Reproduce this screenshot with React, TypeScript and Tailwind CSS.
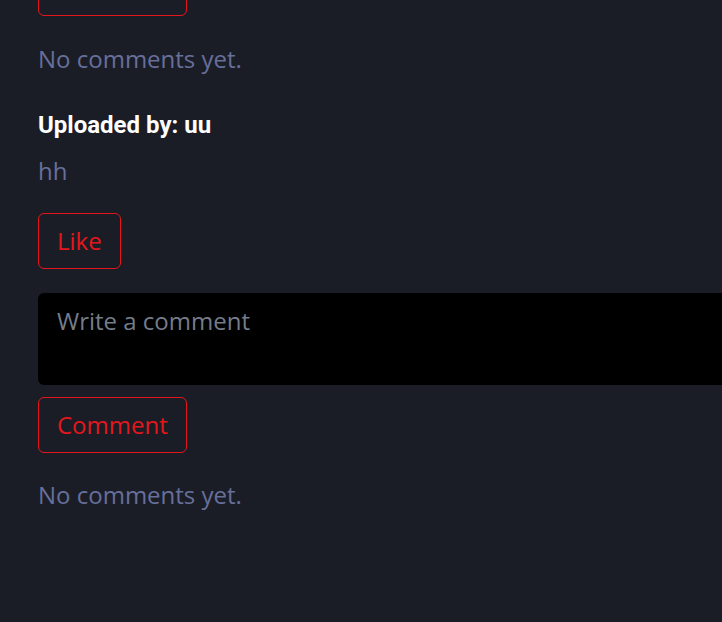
export default function App() {
  return (
    <div className="h-[622px] w-[722px] overflow-hidden bg-[#1b1d26] pl-[38px] font-['Open_Sans',sans-serif]">
      <div className="mt-[-40px] flex flex-col items-start">
        <button className="h-[56px] rounded-[6px] border border-[#e3171b] px-[18px] text-[24px] leading-[36px] text-[#e3171b]">
          Comment
        </button>
        <p className="mt-[25px] text-[24px] leading-[36px] text-[#676f9b]">No comments yet.</p>

        <h4 className="mt-[32px] font-['Roboto',sans-serif] text-[24px] leading-[32px] font-bold text-white">
          Uploaded by: uu
        </h4>
        <p className="mt-[12px] text-[24px] leading-[36px] text-[#676f9b]">hh</p>

        <button className="mt-[24px] h-[56px] rounded-[6px] border border-[#e3171b] px-[18px] text-[24px] leading-[36px] text-[#e3171b]">
          Like
        </button>

        <textarea
          placeholder="Write a comment"
          className="mt-[24px] h-[92px] w-[760px] resize-none rounded-[6px] bg-black px-[19px] py-[10px] text-[24px] leading-[36px] text-white outline-none placeholder:text-[#757c8a]"
        />

        <button className="mt-[12px] h-[56px] rounded-[6px] border border-[#e3171b] px-[18px] text-[24px] leading-[36px] text-[#e3171b]">
          Comment
        </button>
        <p className="mt-[24px] text-[24px] leading-[36px] text-[#676f9b]">No comments yet.</p>
      </div>
    </div>
  );
}
